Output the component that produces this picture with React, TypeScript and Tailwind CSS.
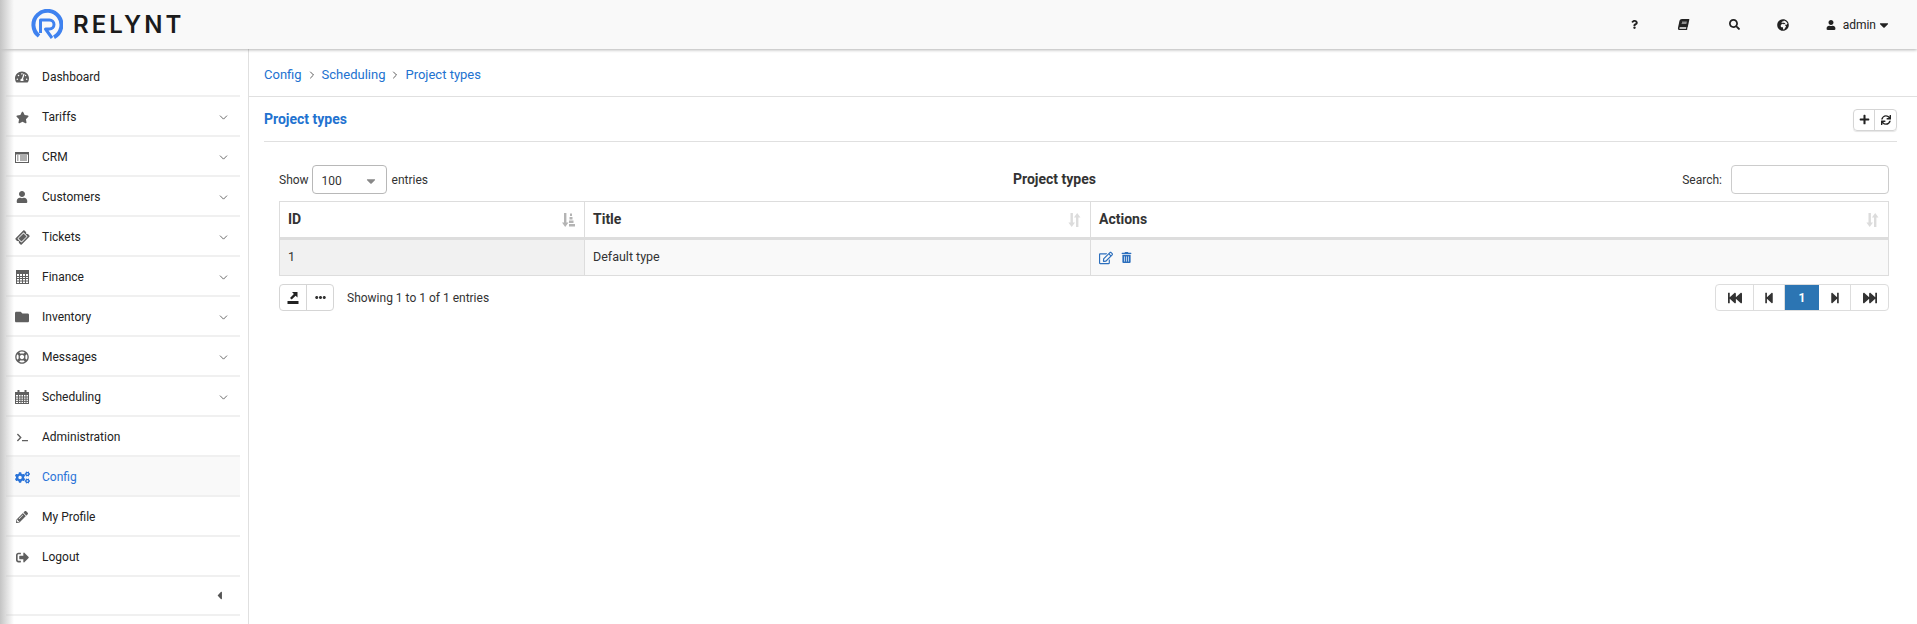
import type { ReactNode } from "react";
import { ChevronDown, ChevronRight } from "lucide-react";
import {
  FaBook,
  FaCaretDown,
  FaCaretLeft,
  FaCogs,
  FaEllipsisH,
  FaFastBackward,
  FaFastForward,
  FaFolder,
  FaGlobeAfrica,
  FaPencilAlt,
  FaPlus,
  FaQuestion,
  FaRegEdit,
  FaRegLifeRing,
  FaSearch,
  FaSignOutAlt,
  FaStar,
  FaStepBackward,
  FaStepForward,
  FaSync,
  FaTachometerAlt,
  FaTerminal,
  FaTicketAlt,
  FaTrashAlt,
  FaUser,
} from "react-icons/fa";

function ListIcon() {
  return (
    <svg width="14" height="11" viewBox="0 0 14 11" fill="none" stroke="#5f5f5f">
      <rect x="0.5" y="0.5" width="13" height="10" />
      <rect x="0.5" y="0.5" width="13" height="1.5" fill="#5f5f5f" />
      <path d="M2 4h1.5M2 6h1.5M2 8h1.5M5 4h7M5 6h7M5 8h7" />
    </svg>
  );
}

function CalcIcon() {
  return (
    <svg width="13" height="14" viewBox="0 0 13 14" fill="none" stroke="#5f5f5f" strokeWidth="1">
      <rect x="0.5" y="0.5" width="12" height="13" />
      <rect x="0.5" y="0.5" width="12" height="3" fill="#5f5f5f" />
      <path d="M0.5 6.5h12M0.5 8.5h12M0.5 11h12M3.5 4v9M6.5 4v9M9.5 4v9" />
    </svg>
  );
}

function CalendarIcon() {
  return (
    <svg width="14" height="14" viewBox="0 0 14 14" fill="none" stroke="#5f5f5f" strokeWidth="1">
      <rect x="0.5" y="2.5" width="13" height="11" />
      <rect x="0.5" y="2.5" width="13" height="2" fill="#5f5f5f" />
      <path d="M0.5 7h13M0.5 9.2h13M0.5 11.4h13M3.5 5v8M6 5v8M8.5 5v8M11 5v8" />
      <path d="M3.5 0v3M10.5 0v3" strokeWidth="2" />
    </svg>
  );
}

function SortBoth() {
  return (
    <svg width="13" height="14" viewBox="0 0 13 14" fill="#dcdcdc">
      <path d="M2.5 0h2.4v9.5H7L3.7 14 .4 9.5h2.1z" />
      <path d="M8 14h2.4V4.5h2.1L9.2 0 5.9 4.5H8z" />
    </svg>
  );
}

function SortAsc() {
  return (
    <svg width="13" height="14" viewBox="0 0 13 14" fill="#b4b4b4">
      <path d="M2 0h2.4v9.5h2.1L3.2 14 0 9.5h2z" />
      <rect x="8" y="0.5" width="2" height="2.5" />
      <rect x="7.5" y="4" width="3" height="2.5" />
      <rect x="7" y="7.5" width="4.5" height="2.5" />
      <rect x="7" y="11" width="6" height="2.5" />
    </svg>
  );
}

function ExportIcon() {
  return (
    <svg width="12" height="12" viewBox="0 0 12 12" fill="#222">
      <rect x="0.5" y="9" width="11" height="3" />
      <path d="M5 0h5.5v5.5L8.6 3.8 4.7 7.6 3 6l3.9-3.9z" />
    </svg>
  );
}

function Logo() {
  return (
    <div className="flex items-center gap-[10px]">
      <svg width="32" height="32" viewBox="0 0 32 32" fill="none" stroke="#3f82ef" strokeWidth="4">
        <path d="M8 27A14 14 0 1 1 23 28.2" />
        <path d="M9.5 24V11h9a4.4 4.4 0 0 1 0 9H14.5L21 29" strokeLinejoin="round" strokeWidth="3" />
      </svg>
      <span className="font-['Inter',sans-serif] text-[24px] font-semibold leading-none tracking-[3px] text-[#1b1b1b]">
        RELYNT
      </span>
    </div>
  );
}

const navItems: { label: string; icon: ReactNode; more?: boolean; active?: boolean }[] = [
  { label: "Dashboard", icon: <FaTachometerAlt size={14} /> },
  { label: "Tariffs", icon: <FaStar size={13} />, more: true },
  { label: "CRM", icon: <ListIcon />, more: true },
  { label: "Customers", icon: <FaUser size={12} />, more: true },
  { label: "Tickets", icon: <FaTicketAlt size={13} className="-rotate-45" />, more: true },
  { label: "Finance", icon: <CalcIcon />, more: true },
  { label: "Inventory", icon: <FaFolder size={14} />, more: true },
  { label: "Messages", icon: <FaRegLifeRing size={14} />, more: true },
  { label: "Scheduling", icon: <CalendarIcon />, more: true },
  { label: "Administration", icon: <FaTerminal size={11} /> },
  { label: "Config", icon: <FaCogs size={15} />, active: true },
  { label: "My Profile", icon: <FaPencilAlt size={12} /> },
  { label: "Logout", icon: <FaSignOutAlt size={13} /> },
];

function Sidebar() {
  return (
    <aside className="w-[249px] shrink-0 border-r border-[#e0e0e0] pl-[6px] pr-2 pt-2">
      {navItems.map((item) => (
        <div
          key={item.label}
          className={`flex h-10 items-center border-b-2 border-[#f0f0f0] pt-[2px] ${item.active ? "bg-[#f9f9f9] text-[#2b74d8]" : "text-[#222222]"}`}
        >
          <span className={`ml-[8px] flex w-[16px] justify-center ${item.active ? "text-[#2b74d8]" : "text-[#5f5f5f]"}`}>
            {item.icon}
          </span>
          <span className="ml-[12px] text-[12px] leading-none">{item.label}</span>
          {item.more && <ChevronDown size={13} strokeWidth={1.6} className="ml-auto mr-[10px] text-[#555555]" />}
        </div>
      ))}
      <div className="flex h-[39px] items-center justify-end border-b-2 border-[#f0f0f0] pr-[14px] text-[#555555]">
        <FaCaretLeft size={13} />
      </div>
    </aside>
  );
}

function TopBar() {
  return (
    <header className="relative z-10 flex h-[49px] items-center bg-[#f9f9f9] pl-[31px] pr-[26px] shadow-[0_1px_3px_rgba(0,0,0,0.3)]">
      <Logo />
      <div className="ml-auto flex items-center text-[#222222]">
        <FaQuestion size={9} className="mr-[39px]" />
        <FaBook size={11} className="mr-[40px] -skew-x-12" />
        <FaSearch size={11} className="mr-[37px]" />
        <FaGlobeAfrica size={12} className="mr-[37px]" />
        <FaUser size={10} />
        <span className="ml-[7px] text-[12px] leading-none">admin</span>
        <FaCaretDown size={14} className="ml-[1px]" />
      </div>
    </header>
  );
}

function Pager() {
  const cell = "flex h-full items-center justify-center border-r border-[#dddddd] text-[#333333]";
  return (
    <div className="flex h-[27px] items-stretch overflow-hidden rounded-[4px] border border-[#dddddd]">
      <div className={`${cell} w-[38px]`}>
        <FaFastBackward size={14} />
      </div>
      <div className={`${cell} w-[31px]`}>
        <FaStepBackward size={12} />
      </div>
      <div className="flex w-[34px] items-center justify-center bg-[#2c75b3] text-[12px] font-bold text-white">1</div>
      <div className={`${cell} w-[32px]`}>
        <FaStepForward size={12} />
      </div>
      <div className="flex w-[37px] items-center justify-center text-[#333333]">
        <FaFastForward size={14} />
      </div>
    </div>
  );
}

function ProjectTable() {
  const th = "h-[37px] border border-[#dddddd] border-b-[3px] px-[8px] text-left text-[14px] font-bold text-[#333333]";
  const td = "h-[37px] border border-[#dddddd] px-[8px] text-[12.5px] text-[#333333]";
  return (
    <table className="w-full table-fixed border-collapse">
      <colgroup>
        <col className="w-[305px]" />
        <col className="w-[506px]" />
        <col />
      </colgroup>
      <thead>
        <tr>
          <th className={th}>
            <div className="flex items-center justify-between pr-[1px]">
              ID
              <SortAsc />
            </div>
          </th>
          <th className={th}>
            <div className="flex items-center justify-between pr-[1px]">
              Title
              <SortBoth />
            </div>
          </th>
          <th className={th}>
            <div className="flex items-center justify-between pr-[1px]">
              Actions
              <SortBoth />
            </div>
          </th>
        </tr>
      </thead>
      <tbody>
        <tr className="bg-[#f9f9f9]">
          <td className={`${td} bg-[#f1f1f1]`}>1</td>
          <td className={td}>Default type</td>
          <td className={td}>
            <div className="flex items-center gap-[8px] text-[#2c6fbd]">
              <FaRegEdit size={14} />
              <FaTrashAlt size={11} />
            </div>
          </td>
        </tr>
      </tbody>
    </table>
  );
}

export default function App() {
  return (
    <div className="relative flex h-[624px] flex-col overflow-hidden bg-white font-['Roboto',sans-serif]">
      <TopBar />
      <div className="flex min-h-0 flex-1">
        <Sidebar />
        <main className="min-w-0 flex-1">
          <div className="flex h-[48px] items-center border-b border-[#e0e0e0] pl-[15px] pt-[5px] text-[13px] text-[#2272d0]">
            Config
            <ChevronRight size={12} strokeWidth={1.6} className="mx-[4px] text-[#333333]" />
            Scheduling
            <ChevronRight size={12} strokeWidth={1.6} className="mx-[4px] text-[#333333]" />
            Project types
          </div>
          <div className="ml-[15px] mr-[20px] flex h-[45px] items-center justify-between border-b border-[#e0e0e0] pt-[1px]">
            <span className="text-[14px] font-bold text-[#2272d0]">Project types</span>
            <div className="flex h-[22px] items-stretch rounded-[4px] border border-[#d5d5d5] shadow-[0_1px_1px_rgba(0,0,0,0.1)]">
              <span className="flex w-[21px] items-center justify-center border-r border-[#d5d5d5] text-[#222222]">
                <FaPlus size={11} />
              </span>
              <span className="flex w-[21px] items-center justify-center text-[#222222]">
                <FaSync size={10} />
              </span>
            </div>
          </div>
          <div className="ml-[30px] mr-[28px] pt-[23px]">
            <div className="mb-[7px] grid h-[29px] grid-cols-[734px_auto_1fr] items-center text-[12px] text-[#333333]">
              <div className="flex items-center">
                Show
                <div className="ml-[3px] mr-[5px] flex h-[29px] w-[75px] items-center justify-between rounded-[4px] border border-[#b8b8b8] pl-[9px] pr-[8px] pt-[2px]">
                  100
                  <FaCaretDown size={14} className="text-[#888888]" />
                </div>
                entries
              </div>
              <div className="text-center text-[14px] font-bold">Project types</div>
              <div className="flex items-center justify-end">
                Search:
                <input
                  aria-label="Search"
                  className="ml-[9px] h-[29px] w-[158px] rounded-[4px] border border-[#cccccc] bg-white"
                />
              </div>
            </div>
            <ProjectTable />
            <div className="mt-[8px] flex items-center">
              <div className="flex h-[27px] items-stretch rounded-[4px] border border-[#d5d5d5]">
                <span className="flex w-[27px] items-center justify-center border-r border-[#d5d5d5]">
                  <ExportIcon />
                </span>
                <span className="flex w-[26px] items-center justify-center text-[#333333]">
                  <FaEllipsisH size={11} />
                </span>
              </div>
              <span className="ml-[13px] text-[12px] text-[#333333]">Showing 1 to 1 of 1 entries</span>
              <div className="ml-auto">
                <Pager />
              </div>
            </div>
          </div>
        </main>
      </div>
      {/* Shadow along the left window edge */}
      <div className="pointer-events-none absolute inset-y-0 left-0 z-20 w-[14px] bg-gradient-to-r from-[#c4c4c4] to-transparent" />
    </div>
  );
}
